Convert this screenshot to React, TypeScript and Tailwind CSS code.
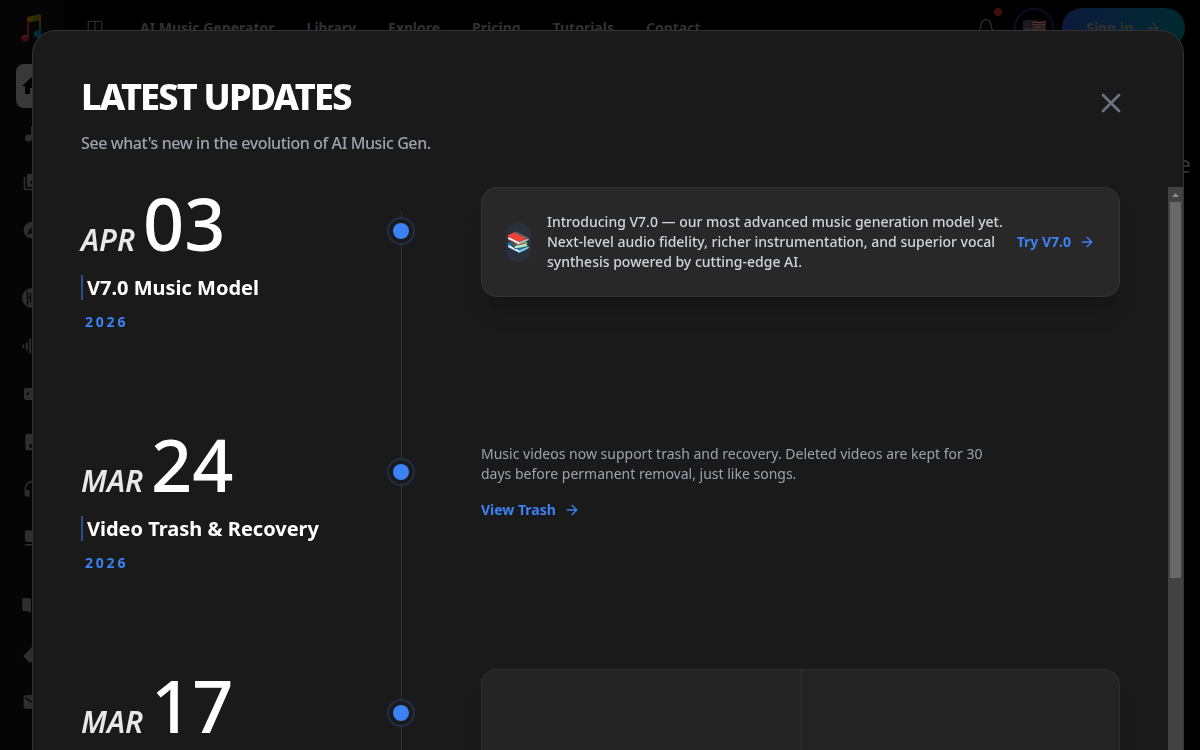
import type { ReactNode } from 'react';
import { ArrowRight, Bell, Columns2, X } from 'lucide-react';
import { MdAudioFile, MdEmail, MdExplore, MdHeadset, MdHome, MdLibraryMusic } from 'react-icons/md';

const navLinks = ['AI Music Generator', 'Library', 'Explore', 'Pricing', 'Tutorials', 'Contact'];

function Glyph({ children }: { children: ReactNode }) {
  return (
    <svg viewBox="0 0 20 20" className="size-5 overflow-visible" fill="currentColor" aria-hidden="true">
      {children}
    </svg>
  );
}

const sideGroups = [
  [
    { label: 'Home', icon: <MdHome className="size-6" />, active: true },
    {
      label: 'Create',
      icon: (
        <Glyph>
          <circle cx="6.5" cy="14" r="3.6" />
          <path d="M9 2.5h8v3h-6.5V14H9z" />
        </Glyph>
      ),
    },
    { label: 'Library', icon: <MdLibraryMusic className="size-5" /> },
    { label: 'Explore', icon: <MdExplore className="size-5" /> },
  ],
  [
    {
      label: 'Stems',
      icon: (
        <Glyph>
          <circle cx="10" cy="10" r="10" />
          <path d="M5.5 3v14M8.500 5v10M11.500 5v10M14.500 3v14M5.500 10h3M11.500 10h3" stroke="#0b0b0b" strokeWidth="1.2" />
        </Glyph>
      ),
    },
    {
      label: 'Extend',
      icon: (
        <Glyph>
          <path d="M.5 8.500h1.800v3.500H.5zM4 6h1.800v8.500H4zM7.300 2.500h1.800v15H7.300zM11 6h1.800v8.500H11zM14.500 8.500h1.800v3.500h-1.800z" />
        </Glyph>
      ),
    },
    {
      label: 'Video',
      icon: (
        <Glyph>
          <path
            fillRule="evenodd"
            d="M4 4h12a2 2 0 0 1 2 2v8a2 2 0 0 1-2 2H4a2 2 0 0 1-2-2V6a2 2 0 0 1 2-2zm2 4.500a1.300 1.300 0 1 0 0 2.600 1.300 1.300 0 0 0 0-2.600zm8 0a1.300 1.300 0 1 0 0 2.600 1.300 1.300 0 0 0 0-2.600z"
          />
        </Glyph>
      ),
    },
    { label: 'Files', icon: <MdAudioFile className="size-5" /> },
    { label: 'Listen', icon: <MdHeadset className="size-5" /> },
    {
      label: 'Lounge',
      icon: (
        <Glyph>
          <path d="M3 2.500h14V11a3 3 0 0 1-3 3H6a3 3 0 0 1-3-3zM3 16h14v1.500H3z" />
        </Glyph>
      ),
    },
  ],
  [
    {
      label: 'Guides',
      icon: (
        <Glyph>
          <path d="M1.500 2C4 1.700 7 2 9 3v13.500c-2-1-4.500-1.500-7.500-1.500C.6 15 .3 14.500.3 14V3.200C.3 2.500.6 2.100 1.500 2zM18.500 2C16 1.700 13 2 11 3v13.500c2-1 4.500-1.500 7.500-1.500.9 0 1.200-.5 1.200-1V3.200c0-.7-.3-1.100-1.200-1.200z" />
        </Glyph>
      ),
    },
    {
      label: 'Offers',
      icon: (
        <Glyph>
          <path d="M2 11.300 10.500 2.500H17a1 1 0 0 1 1 1v6L9 18a1.500 1.500 0 0 1-2 0l-5-5a1.200 1.200 0 0 1 0-1.700z" />
        </Glyph>
      ),
    },
    { label: 'Contact', icon: <MdEmail className="size-5" /> },
  ],
] as { label: string; icon: ReactNode; active?: boolean }[][];

function Logo() {
  return (
    <svg viewBox="0 0 24 30" className="h-[30px] w-6" aria-label="AI Music Gen" role="img">
      <defs>
        <linearGradient id="beam" x1="0" y1="0" x2="1" y2="0.3">
          <stop offset="0" stopColor="#ef4444" />
          <stop offset="0.35" stopColor="#d99a0b" />
          <stop offset="0.65" stopColor="#65a30d" />
          <stop offset="1" stopColor="#e0701a" />
        </linearGradient>
        <linearGradient id="stem" x1="0" y1="0" x2="0" y2="1">
          <stop offset="0" stopColor="#d98a0b" />
          <stop offset="0.5" stopColor="#3f9a5a" />
          <stop offset="1" stopColor="#0e8fc0" />
        </linearGradient>
      </defs>
      <path d="M7 4 21 1v6L7 10z" fill="url(#beam)" />
      <path d="M7 8h2v17H7z" fill="#c0392b" />
      <path d="M19 6h2v16h-2z" fill="url(#stem)" />
      <ellipse cx="5" cy="25" rx="4" ry="3.500" fill="#d0204a" />
      <ellipse cx="17.500" cy="21" rx="3.800" ry="3.500" fill="#0e8fc0" />
      <path d="m2.500 24 5-1.500" stroke="#d9b014" />
    </svg>
  );
}

function Sidebar() {
  return (
    <aside className="flex w-16 shrink-0 flex-col items-center bg-[#111111]">
      <div className="flex h-14 items-center">
        <Logo />
      </div>
      <nav className="flex w-full flex-col gap-6 px-4 pt-2" aria-label="Sections">
        {sideGroups.map((group, i) => (
          <div key={i} className="flex flex-col gap-1">
            {group.map((item) => (
              <button
                key={item.label}
                aria-label={item.label}
                className={
                  item.active
                    ? 'flex h-11 items-center justify-center rounded-lg bg-[#bbbbbb] text-black'
                    : 'flex h-11 items-center justify-center rounded-lg text-[#9a9a9a]'
                }
              >
                {item.icon}
              </button>
            ))}
          </div>
        ))}
      </nav>
    </aside>
  );
}

function Header() {
  return (
    <header className="flex h-14 items-center pr-[15px] pl-[22px] text-sm font-bold text-[#a3a3a3]">
      <button aria-label="Toggle sidebar">
        <Columns2 className="size-[18px]" strokeWidth={1.5} />
      </button>
      <nav className="ml-9 flex gap-8 whitespace-nowrap" aria-label="Main">
        {navLinks.map((name) => (
          <a key={name} href="#">
            {name}
          </a>
        ))}
      </nav>
      <div className="ml-auto flex items-center gap-2">
        <button aria-label="Notifications" className="relative mr-0.5 p-2">
          <Bell className="size-5" strokeWidth={1.5} />
          <span className="absolute -top-0.5 right-0.5 size-2 rounded-full bg-[#dc2f2f]" />
        </button>
        <button
          aria-label="Language"
          className="flex size-10 items-center justify-center rounded-full border-2 border-[#1e3470] text-xl"
        >
          <span className="opacity-80">🇺🇸</span>
        </button>
        <button className="flex h-10 items-center gap-3 rounded-full bg-gradient-to-r from-[#2a5acb] to-[#008a9a] px-6">
          Sign in
          <ArrowRight className="size-4" />
        </button>
      </div>
    </header>
  );
}

function ActionLink({ children }: { children: ReactNode }) {
  return (
    <a href="#" className="flex w-fit shrink-0 items-center gap-2 text-sm font-bold text-[#3b82f6]">
      {children}
      <ArrowRight className="size-4" />
    </a>
  );
}

type EntryProps = { month: string; day: string; title?: string; year?: string; children: ReactNode };

function Entry({ month, day, title, year, children }: EntryProps) {
  return (
    <li className="relative grid grid-cols-[320px_1fr] pb-24">
      <div>
        <p className="flex items-baseline gap-2 text-white">
          <span className="text-3xl leading-none font-semibold text-white/90 italic">{month}</span>
          <span className="text-7xl leading-none font-medium">{day}</span>
        </p>
        {title && (
          <h3 className="mt-4 border-l-2 border-[#3b82f6]/50 pl-1 text-xl leading-tight font-bold text-white">{title}</h3>
        )}
        {year && <p className="mt-3 pl-1 text-sm font-bold tracking-[0.2em] text-[#3b82f6]">{year}</p>}
      </div>
      <span className="absolute top-[30px] left-[306px] flex size-7 items-center justify-center rounded-full border-2 border-[#3b82f6]/20 bg-[#1a1a1a]">
        <span className="size-4 rounded-full bg-[#3b82f6]" />
      </span>
      <div className="pl-20">{children}</div>
    </li>
  );
}

function Scrollbar() {
  return (
    <div className="mt-8 w-[15px] shrink-0 bg-[#424242] px-0.5" aria-hidden="true">
      <svg viewBox="0 0 11 15" className="h-[15px] w-[11px]">
        <path d="M2 10h7L5.500 6z" fill="#8a8a8a" />
      </svg>
      <div className="h-[376px] bg-[#686868]" />
    </div>
  );
}

function UpdatesDialog() {
  return (
    <section
      role="dialog"
      aria-modal="true"
      aria-labelledby="updates-title"
      className="flex h-full flex-col overflow-hidden rounded-t-3xl border border-b-0 border-[#333333] bg-[#1a1a1a]"
    >
      <div className="flex items-start justify-between px-12 pt-12">
        <div>
          <h2 id="updates-title" className="text-4xl leading-none font-extrabold tracking-tighter text-white">
            LATEST UPDATES
          </h2>
          <p className="mt-4 text-base font-medium tracking-tight text-[#9ca3af]">
            See what's new in the evolution of AI Music Gen.
          </p>
        </div>
        <button aria-label="Close" className="p-2 text-[#6b7280]">
          <X className="size-8" />
        </button>
      </div>
      <div className="flex min-h-0 flex-1">
        <div className="min-w-0 flex-1 overflow-hidden px-12 pt-8">
          <ol className="relative">
            <span className="absolute top-6 bottom-0 left-80 w-px bg-white/10" />
            <Entry month="APR" day="03" title="V7.0 Music Model" year="2026">
              <div className="flex items-center gap-4 rounded-2xl border border-white/5 bg-[#282828] p-6 shadow-xl">
                <span className="flex h-10 w-[25px] shrink-0 items-center justify-center rounded-full bg-[#3b82f6]/10 text-xl">
                  📚
                </span>
                <div className="flex flex-1 items-center gap-3">
                  <p className="flex-1 text-sm font-medium text-[#d1d5db]">
                    Introducing V7.0 — our most advanced music generation model yet. Next-level audio fidelity, richer
                    instrumentation, and superior vocal synthesis powered by cutting-edge AI.
                  </p>
                  <ActionLink>Try V7.0</ActionLink>
                </div>
              </div>
            </Entry>
            <Entry month="MAR" day="24" title="Video Trash & Recovery" year="2026">
              <div className="pt-4">
                <p className="mb-4 max-w-lg text-sm text-[#9ca3af]">
                  Music videos now support trash and recovery. Deleted videos are kept for 30 days before permanent
                  removal, just like songs.
                </p>
                <ActionLink>View Trash</ActionLink>
              </div>
            </Entry>
            <Entry month="MAR" day="17">
              <div className="grid h-80 grid-cols-2 rounded-2xl border border-white/5 bg-[#242424] shadow-xl">
                <div />
                <div className="border-l border-white/5" />
              </div>
            </Entry>
          </ol>
        </div>
        <Scrollbar />
      </div>
    </section>
  );
}

export default function App() {
  return (
    <div className="relative h-screen overflow-hidden bg-black font-['Noto_Sans',sans-serif]">
      <div className="flex h-full">
        <Sidebar />
        <div className="min-w-0 flex-1">
          <Header />
          <p className="pt-[92px] pr-[9px] text-right text-2xl text-[#a3a3a3]">e</p>
        </div>
      </div>
      <div className="fixed inset-0 bg-black/70 pt-[30px] pr-4 pl-8">
        <UpdatesDialog />
      </div>
    </div>
  );
}
